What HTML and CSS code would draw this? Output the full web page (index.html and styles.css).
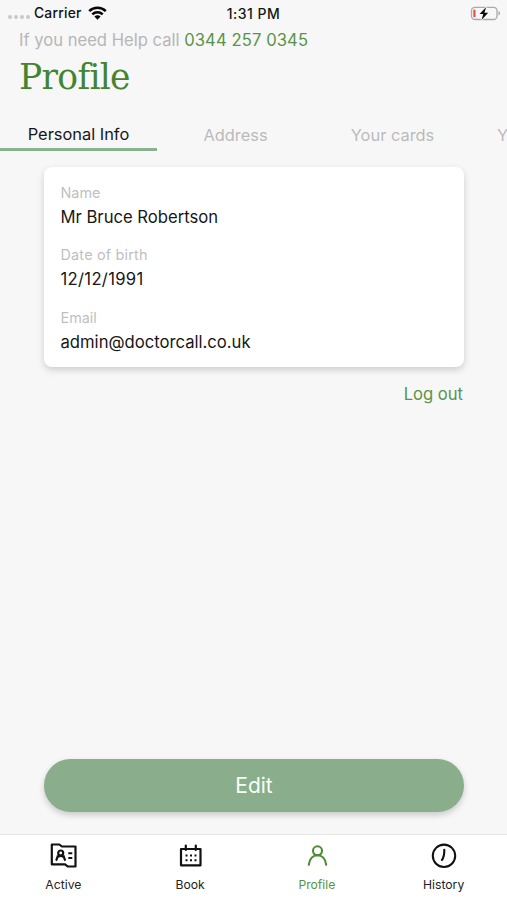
FILE: index.html
```html
<!DOCTYPE html>
<html lang="en">
<head>
<meta charset="utf-8">
<title>Profile</title>
<link rel="stylesheet" href="styles.css">
</head>
<body>
<div class="screen">
  <div class="status">
    <div class="carrier">
      <span class="dots"><i></i><i></i><i></i><i></i></span>
      <span class="carrier-name">Carrier</span>
      <svg class="wifi" width="19" height="14" viewBox="0 0 19 14"><g fill="none" stroke="#080808" stroke-width="2.5"><path d="M1.2 5.1A11.8 11.8 0 0 1 17.8 5.1"/><path d="M4.3 8.3A7.4 7.4 0 0 1 14.7 8.3"/></g><path d="M6.4 10.6a4.4 4.4 0 0 1 6.2 0L9.5 13.8z" fill="#080808"/></svg>
    </div>
    <div class="time">1:31 PM</div>
    <svg class="battery" width="31" height="15" viewBox="0 0 31 15"><rect x="1.5" y="1.3" width="25.5" height="12.2" rx="3.5" fill="none" stroke="#a9aaa9" stroke-width="1.3"/><path d="M28.5 5v4.5q1.6-.5 1.6-2.2T28.5 5z" fill="#a9aaa9"/><rect x="3.3" y="3.5" width="2.2" height="7.8" rx="1" fill="#f34b45"/><path d="M16.2 1 9.6 8h3.7l-1.8 6 6.7-7.3h-3.8z" fill="#080808" stroke="#f7f7f7" stroke-width="1.6" paint-order="stroke"/></svg>
  </div>
  <p class="help">If you need Help call <a>0344 257 0345</a></p>
  <h1>Profile</h1>
  <nav class="tabs">
    <span class="tab selected">Personal Info</span>
    <span class="tab">Address</span>
    <span class="tab">Your cards</span>
    <span class="tab next">Y</span>
  </nav>
  <main>
    <dl class="card">
      <dt>Name</dt><dd>Mr Bruce Robertson</dd>
      <dt class="birth-label">Date of birth</dt><dd class="birth">12/12/1991</dd>
      <dt>Email</dt><dd>admin@doctorcall.co.uk</dd>
    </dl>
    <a class="logout">Log out</a>
    <button class="edit">Edit</button>
  </main>
  <footer>
    <div class="item">
      <svg width="30" height="28" viewBox="0 0 30 28" fill="none" stroke="#111" stroke-width="2.2"><path d="M3.8 2.500h7.500l2.600 2H27.500v20h-7.800l-2.600-2.200H3.800z" stroke-linejoin="round"/><path d="M8 18.600c.8-1 1.400-3.300 2-5.200M17.400 18.600c-.8-1-1.400-3.300-2-5.200M9.900 14.800c1.700-1 3.900-1 5.600 0"/><circle cx="12.700" cy="11" r="2.500"/><path d="M20.300 11.300h4M20.300 16h4" stroke-width="1.900"/></svg>
      <span>Active</span>
    </div>
    <div class="item">
      <svg width="30" height="28" viewBox="0 0 30 28"><path d="M6 7h19.500v16.300H6zM10.800 3.500v4.500M20.800 3.500v4.500" fill="none" stroke="#111" stroke-width="2.200" stroke-linejoin="round" stroke-linecap="round"/><path d="M10.500 13.600h12M10.500 18.200h12" stroke="#111" stroke-width="2" stroke-dasharray="2 2.500"/></svg>
      <span>Book</span>
    </div>
    <div class="item active">
      <svg width="30" height="28" viewBox="0 0 30 28" fill="none" stroke="#4b8b35" stroke-width="2.1" stroke-linecap="round"><circle cx="15.500" cy="8.800" r="4.500"/><path d="M6.800 22.800C7.500 16.800 11 13.300 15.500 13.300s8 3.500 8.700 9.500"/></svg>
      <span>Profile</span>
    </div>
    <div class="item">
      <svg width="30" height="28" viewBox="0 0 30 28" fill="none" stroke="#111" stroke-width="2.1" stroke-linecap="round"><circle cx="15" cy="13.800" r="11.200"/><path d="M15.300 7.800c.1 5-.3 7.600-2.400 10.200"/></svg>
      <span>History</span>
    </div>
  </footer>
</div>
</body>
</html>
```
FILE: styles.css
```css
* { box-sizing: border-box; }
body { margin: 0; font-family: Inter, "Liberation Sans", sans-serif; color: #161616; }
.screen { width: 507px; height: 900px; background: #f7f7f7; display: flex; flex-direction: column; overflow: hidden; }
.status { height: 26px; flex: none; display: grid; grid-template-columns: 1fr auto 1fr; padding: 0 6px; align-items: center; }
.carrier { display: flex; align-items: center; font-size: 13.8px; letter-spacing: .25px; font-weight: 500; color: #111; padding-left: 2px; }
.dots { display: flex; gap: 2px; width: 26px; padding-top: 7px; }
.dots i { width: 4px; height: 4px; border-radius: 50%; background: #c8c8c8; }
.wifi { margin-left: 6px; }
.time { font-size: 14px; font-weight: 500; letter-spacing: .5px; }
.battery { justify-self: end; }
.help { margin: 0; padding-left: 19px; height: 26px; flex: none; line-height: 28px; font-size: 16.6px; color: #b6b6b6; white-space: nowrap; }
.help a { color: #579447; letter-spacing: .1px; }
h1 { margin: 0; padding-left: 19px; height: 58px; flex: none; font: 400 34.5px/51px "DejaVu Serif", serif; letter-spacing: -.7px; color: #438431; }
.tabs { display: flex; width: 628px; height: 41px; flex: none; }
.tab { width: 157px; height: 41px; flex: none; display: flex; align-items: center; justify-content: center; font-size: 16.4px; color: #bbb; padding-top: 8px; white-space: nowrap; }
.tab.selected { color: #161616; border-bottom: 3px solid #88b28d; padding-top: 10px; }
.tab.next { justify-content: flex-start; padding-left: 26px; }
main { flex: 1; display: flex; flex-direction: column; margin: 16px 43px 0 44px; }
.card { margin: 0; height: 200px; padding: 15px 16.5px; background: #fff; border-radius: 8px; box-shadow: 0 3px 7px rgba(0,0,0,.17); }
dt { height: 21px; line-height: 21px; font-size: 14.4px; color: #bfbfbf; }
.birth-label { letter-spacing: .2px; }
dd { margin: 0 0 13.3px; height: 28px; line-height: 28px; font-size: 16.65px; }
.birth { letter-spacing: .3px; }
.logout { align-self: flex-end; margin: 16px 1px 0 0; line-height: 22px; font-size: 16.6px; color: #579447; }
.edit { margin: auto 0 22px; height: 53px; flex: none; border: 0; border-radius: 27px; background: #8aae8b; color: #f7fff7; font: 400 21px Inter, sans-serif; box-shadow: 0 3px 6px rgba(0,0,0,.19); }
footer { height: 66px; flex: none; display: flex; background: #fff; border-top: 1px solid #e5e5e5; }
.item { flex: 1; display: flex; flex-direction: column; align-items: center; padding-top: 7px; font-size: 12.2px; line-height: 18px; color: #222; }
.item svg { margin-bottom: 6px; flex: none; }
.active { color: #579447; }
```
